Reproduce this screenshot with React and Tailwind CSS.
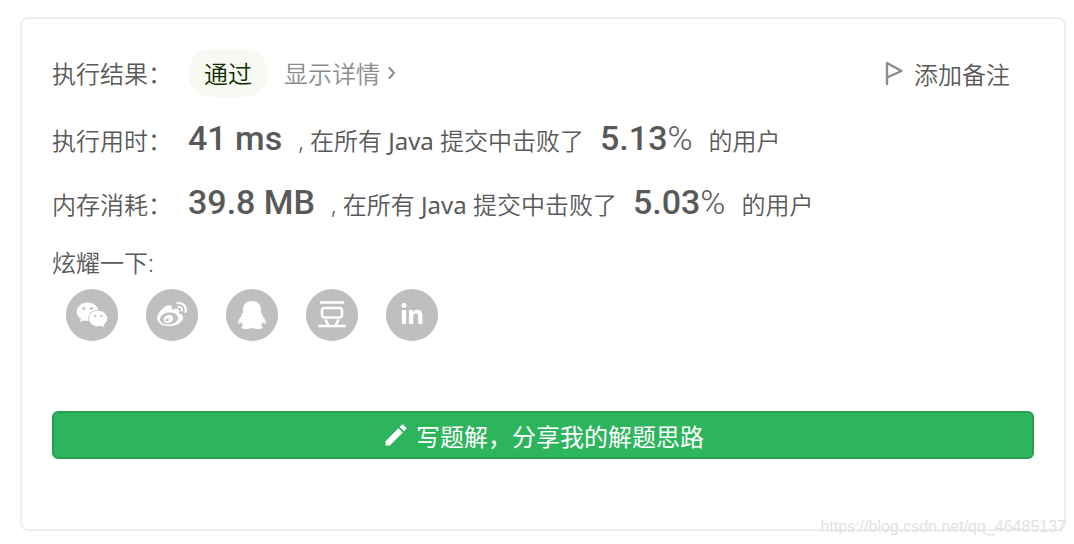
import React from 'react'
import { FaWeibo, FaWeixin, FaLinkedinIn } from 'react-icons/fa'
import { MdEdit } from 'react-icons/md'

const stats = [
    { label: '执行用时：', value: '41 ms', percent: '5.13' },
    { label: '内存消耗：', value: '39.8 MB', percent: '5.03' },
]

const QqIcon = () => (
    <svg viewBox="0 0 80 80" className="size-7" fill="currentColor">
        <path d="M40 0C24 0 14 11 14 26c0 3 0 5 .5 7C11 36 10 39 10.500 42 4 49 0 57 1 63c1 4 5 1 8-3 1 4 3 7 6 10-5 2-6 5-4 8 4 3 20 3 29-1 9 4 25 4 29 1 2-3 1-6-4-8 3-3 5-6 6-10 3 4 7 7 8 3 1-6-3-14-9.500-21 .5-3-.5-6-4-9 .5-2 .5-4 .5-7C66 11 56 0 40 0z" />
    </svg>
)

const DoubanIcon = () => (
    <svg viewBox="0 0 28 28" className="size-7" fill="none" stroke="currentColor" strokeWidth="2.600" strokeLinecap="round" strokeLinejoin="round">
        <path d="M3 1.500h22M1.500 25h25M8 19.500l2.500 5M20 19.500l-2.500 5" />
        <rect x="4" y="7" width="20" height="9.500" rx="2.500" />
    </svg>
)

const shareLinks = [
    { name: '微信', icon: <FaWeixin className="size-8" /> },
    { name: '微博', icon: <FaWeibo className="size-[30px]" /> },
    { name: 'QQ', icon: <QqIcon /> },
    { name: '豆瓣', icon: <DoubanIcon /> },
    { name: 'LinkedIn', icon: <FaLinkedinIn className="size-6" /> },
]

const StatRow = ({ label, value, percent }) => (
    <div className="flex h-16 items-baseline gap-4 whitespace-nowrap">
        <span className="w-[120px]">{label}</span>
        <span className="font-[Roboto] text-[34px] leading-[66px] font-medium">{value}</span>
        <span>, 在所有 <span className="font-normal">Java</span> 提交中击败了</span>
        <span className="font-[Roboto] text-[34px] leading-[66px] font-medium">
            {percent}<span className="font-light">%</span>
        </span>
        <span>的用户</span>
    </div>
)

const App = () => {
    return (
        <div className="relative pt-[17px] pr-2 pb-3 pl-5 bg-white font-['Noto_Sans','Noto_Sans_CJK_SC',sans-serif] text-[24px] leading-8 font-[350] text-[#595959]">
            <main className="rounded-lg border-2 border-[#eeeeee] px-[30px] pt-[30px] pb-[70px]">
                <div className="flex h-12 items-baseline gap-4 whitespace-nowrap">
                    <span className="w-[120px]">执行结果：</span>
                    <span className="rounded-full bg-[#f7faf3] px-4 pt-[9px] pb-[7px] text-[#0f2b00]">通过</span>
                    <a href="#detail" className="flex items-center text-[#8c8c8c]">
                        显示详情
                        <svg viewBox="0 0 24 24" className="size-6" fill="none" stroke="currentColor" strokeWidth="2" strokeLinecap="round">
                            <path d="M9.500 6l4.500 5-4.500 5" />
                        </svg>
                    </a>
                    <button type="button" className="mr-6 ml-auto flex items-center gap-2 self-center pt-[3px]">
                        <svg viewBox="0 0 22 28" className="h-7 w-[22px] text-[#8c8c8c]" fill="none" stroke="currentColor" strokeWidth="2.400" strokeLinecap="round" strokeLinejoin="round">
                            <path d="M3 23V2l14.500 8L3 16.500" />
                        </svg>
                        添加备注
                    </button>
                </div>

                <div className="pt-2">
                    {stats.map((item) => (
                        <StatRow key={item.label} {...item} />
                    ))}
                </div>

                <div className="pt-[14px]">炫耀一下:</div>
                <div className="flex gap-7 pt-[10px] pl-[14px]">
                    {shareLinks.map((item) => (
                        <a
                            key={item.name}
                            href="#share"
                            aria-label={item.name}
                            className="flex size-[52px] items-center justify-center rounded-full bg-[#bfbfbf] text-white"
                        >
                            {item.icon}
                        </a>
                    ))}
                </div>

                <button
                    type="button"
                    className="mt-[70px] flex h-12 w-full items-center justify-center gap-1.5 rounded-md border-2 border-[#2b9e52] bg-[#2db55d] font-normal text-white"
                >
                    <MdEdit className="size-7" />
                    <span className="pt-[3px]">写题解，分享我的解题思路</span>
                </button>
            </main>

            <div className="absolute right-2 bottom-1.5 font-['Liberation_Sans',sans-serif] text-[16px] leading-5 font-normal text-[#e2e2e2]">
                https://blog.csdn.net/qq_46485137
            </div>
        </div>
    )
}

export default App
